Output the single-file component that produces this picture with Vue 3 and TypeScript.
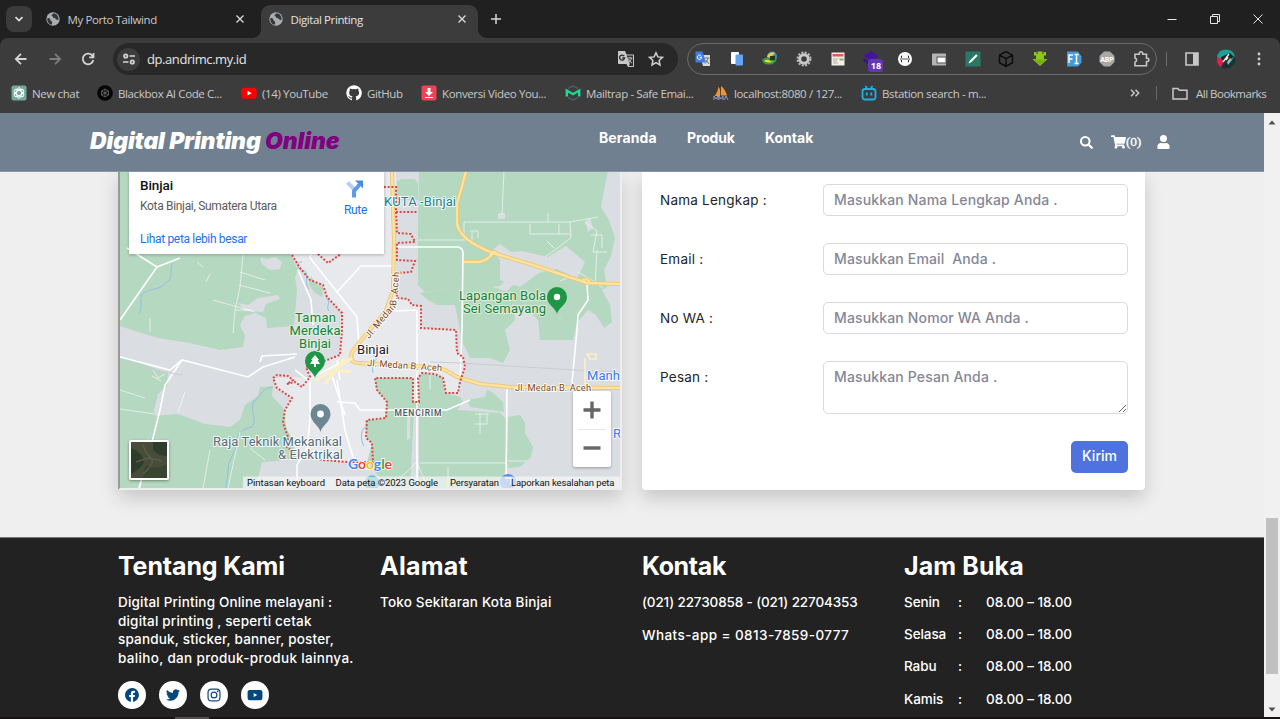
<script setup lang="ts">
interface Bookmark { icon: string; label: string }
interface Field { label: string; hint: string; cls: string; multiline?: boolean }

const tabs = [
  { title: 'My Porto Tailwind', active: false },
  { title: 'Digital Printing', active: true },
]

const extensions = [
  'gtranslate', 'copy', 'idm', 'gear', 'news', 'layers', 'json',
  'wallet', 'pen', 'cube', 'download', 'font', 'abp', 'puzzle',
]

const bookmarks: Bookmark[] = [
  { icon: 'gpt', label: 'New chat' },
  { icon: 'blackbox', label: 'Blackbox AI Code C...' },
  { icon: 'youtube', label: '(14) YouTube' },
  { icon: 'github', label: 'GitHub' },
  { icon: 'convert', label: 'Konversi Video You...' },
  { icon: 'mailtrap', label: 'Mailtrap - Safe Emai...' },
  { icon: 'pma', label: 'localhost:8080 / 127...' },
  { icon: 'bstation', label: 'Bstation search - m...' },
]

const menu = ['Beranda', 'Produk', 'Kontak']

const fields: Field[] = [
  { label: 'Nama Lengkap :', hint: 'Masukkan Nama Lengkap Anda .', cls: 'name' },
  { label: 'Email :', hint: 'Masukkan Email  Anda .', cls: 'email' },
  { label: 'No WA :', hint: 'Masukkan Nomor WA Anda .', cls: 'wa' },
  { label: 'Pesan :', hint: 'Masukkan Pesan Anda .', cls: 'message', multiline: true },
]

const about = [
  'Digital Printing Online melayani :',
  'digital printing , seperti cetak',
  'spanduk, sticker, banner, poster,',
  'baliho, dan produk-produk lainnya.',
]

const hours = ['Senin', 'Selasa', 'Rabu', 'Kamis']
const socials = ['facebook', 'twitter', 'instagram', 'video']
</script>

<template>
  <div class="window">
    <header class="chrome">
      <div class="tabstrip">
        <button class="tab-search">
          <svg width="10" height="10" viewBox="0 0 10 10"><path d="M1.5 3.2 5 6.6l3.500-3.400" /></svg>
        </button>
        <div v-for="tab in tabs" :key="tab.title" class="tab" :class="{ active: tab.active }">
          <svg class="globe" width="14" height="14" viewBox="0 0 14 14">
            <circle cx="7" cy="7" r="6.700" fill="#a9adb1" />
            <path d="M1.300 6.200C3 5.600 4.300 6.500 4.300 7.700s1.900 1 1.900 2.500-.2 2.200-.9 2.600C2.500 12 1 9.500 1.300 6.200ZM7.500 1.300c-.8 1.300-1.900 1-1.900 2.100s1.700.5 1.600 1.900 2 .3 2.400 1.500 1.400 1.400 2.800 1c.7-3-1.500-6.300-4.900-6.500Z" fill="#34373a" />
          </svg>
          <span class="tab-title">{{ tab.title }}</span>
          <svg class="close" width="10" height="10" viewBox="0 0 10 10"><path d="m1.500 1.500 7 7m0-7-7 7" /></svg>
        </div>
        <svg class="new-tab" width="12" height="12" viewBox="0 0 12 12"><path d="M6 1v10M1 6h10" /></svg>
        <div class="win-controls">
          <svg width="12" height="12" viewBox="0 0 12 12"><path d="M1.500 6.500h9" /></svg>
          <svg width="12" height="12" viewBox="0 0 12 12"><path d="M1.500 3.500h7v7h-7zM3.500 3.500v-2h7v7h-2" /></svg>
          <svg width="12" height="12" viewBox="0 0 12 12"><path d="m1.500 1.500 9 9m0-9-9 9" /></svg>
        </div>
      </div>

      <div class="toolbar">
        <div class="history">
          <svg width="14" height="14" viewBox="0 0 14 14"><path d="M12.500 7H2M7 1.800 1.800 7 7 12.200" /></svg>
          <svg class="off" width="14" height="14" viewBox="0 0 14 14"><path d="M1.500 7H12M7 1.800 12.200 7 7 12.200" /></svg>
          <svg width="14" height="14" viewBox="0 0 14 14"><path d="M11.600 4.200A5.300 5.300 0 1 0 12.300 8M12.500 1v4.300H8.200" /></svg>
        </div>
        <div class="omnibox">
          <span class="site-info">
            <svg width="14" height="14" viewBox="0 0 14 14">
              <circle cx="3.700" cy="4" r="1.700" /><path d="M7.500 4H13M1 10h5.500" /><circle cx="10.300" cy="10" r="1.700" />
            </svg>
          </span>
          <span class="url">dp.andrimc.my.id</span>
          <svg class="page-translate" width="18" height="18" viewBox="0 0 18 18">
            <path d="M1 1h7l1.500 3.500H16c.6 0 1 .4 1 1V16c0 .6-.4 1-1 1h-5l-1.500-3H2c-.6 0-1-.4-1-1Z" fill="#c7c7c7" />
            <path d="M9.700 5.500H16V16h-4.300l1.200-2z" fill="#2b2b2b" />
            <path d="M7.200 6.200A2.500 2.500 0 1 0 7.600 8H5.200" fill="none" stroke="#2b2b2b" stroke-width="1.300" />
            <path d="M10.500 8h5M13 6.800V8m1.500 0c-.5 2.500-2 4-3.500 5m.6-4c.8 2 2 3 3.400 4" fill="none" stroke="#c7c7c7" />
          </svg>
          <svg class="star" width="16" height="16" viewBox="0 0 16 16"><path d="m8 1.700 1.900 4.200 4.600.5-3.400 3.100.9 4.500L8 11.700 4 14l.9-4.500-3.400-3.100 4.600-.5Z" /></svg>
        </div>

        <div class="extensions">
          <span v-for="ext in extensions" :key="ext" class="ext">
            <svg width="18" height="18" viewBox="0 0 18 18">
              <g v-if="ext === 'gtranslate'">
                <path d="M6 5h10v11H9z" fill="#d9dadd" /><path d="M1.500 1.500h7l3.500 11h-10.500z" fill="#3f7de0" />
                <path d="M7.300 6A2.200 2.200 0 1 0 7.700 7.300H5.500" fill="none" stroke="#fff" /><path d="M10.500 8h5M14 8c-.3 2-1.300 4-3 5.500m1-3.500 3 4" fill="none" stroke="#777" />
              </g>
              <g v-else-if="ext === 'copy'">
                <rect x="3" y="2" width="8" height="12" rx="1" fill="#fff" /><rect x="7.500" y="4.500" width="7.500" height="11" rx="1" fill="#64a4f5" />
              </g>
              <g v-else-if="ext === 'idm'">
                <circle cx="11" cy="6.500" r="5" fill="#3d8bc9" /><path d="M6 7c1-4 6-6 8-4l-5 5z" fill="#f0cc35" />
                <path d="M1 10c3-3 7-3 9-1s4 0 6-1c-1 5-5 7-9 6.500C4 14.500 2 13 1 10Z" fill="#2f9e3d" /><path d="M3 11c3-2 5-1 6 0s2 0 3 0c-2 2-5 2-9 0Z" fill="#f5d33b" /><path d="M9 6h5v4H9z" fill="#203b22" />
              </g>
              <g v-else-if="ext === 'gear'">
                <circle cx="9" cy="9" r="6.500" fill="none" stroke="#bbb" stroke-width="2" stroke-dasharray="2 1.400" /><circle cx="9" cy="9" r="4.300" fill="none" stroke="#c9c9c9" stroke-width="3" />
              </g>
              <g v-else-if="ext === 'news'">
                <rect x="2.500" y="2.500" width="13" height="13" fill="#f1efe9" /><path d="M3.500 4h11v2.500h-11z" fill="#e5575b" /><path d="M4 9h5M4 11h4M4 13h5" stroke="#b4b48c" /><path d="M10.500 8.500h4v2h-4z" fill="#8bab74" />
              </g>
              <g v-else-if="ext === 'layers'"><path d="m9 1 7.500 5L9 11 1.500 6Z" fill="#4314a0" /><path d="m1.500 8 7.500 5 3-2v4l-3 1.500L1.500 11Z" fill="#35108a" /></g>
              <g v-else-if="ext === 'json'">
                <circle cx="9" cy="9" r="7" fill="#fff" /><path d="M6.200 5.500c-1.400 0 0 3-1.700 3.500 1.700.5.300 3.500 1.700 3.500m5.600-7c1.400 0 0 3 1.700 3.500-1.700.5-.3 3.500-1.700 3.500" fill="none" stroke="#222" /><path d="M6.500 9h1m1 0h1m1 0h1" stroke="#222" stroke-width="1.300" />
              </g>
              <g v-else-if="ext === 'wallet'"><rect x="2" y="3.500" width="14" height="12" rx=".7" fill="#b4b4b4" /><rect x="7" y="7" width="9" height="6" fill="#f5f5f5" stroke="#555" /><path d="M9 8.500h5v3H9z" fill="#fff" /></g>
              <g v-else-if="ext === 'pen'"><path d="M1.500 1.500h15v15h-15z" fill="#2c7866" /><path d="m4.500 13.500 1.200-2.700 6.500-6.500 1.500 1.500-6.500 6.500Z" fill="#fff" /></g>
              <g v-else-if="ext === 'cube'" fill="none" stroke="#0c0c0c" stroke-width="1.500"><path d="m9 1.700 6.500 3.500v7.500L9 16.300l-6.500-3.600V5.200Zm-6.500 3.500L9 8.700l6.500-3.500M9 8.700v7.600" /></g>
              <g v-else-if="ext === 'download'"><path d="M3 2h2.500v2h1V1.500h5V4h1V2H15v3.500h-2V9h3.500L9 16 1.500 9H5V5.500H3Z" fill="#8cc914" /><path d="M3 9.500h12l-6 6Z" fill="#76b112" /></g>
              <g v-else-if="ext === 'font'"><path d="M2 1.500h11l3.500 5v6L13 16.500H2z" fill="#459bd7" /><path d="M4 13V5h4M4 9h3.500M9.500 4.500h4m-2 0v9m-2 0h4" fill="none" stroke="#fff" stroke-width="1.400" /></g>
              <g v-else-if="ext === 'abp'"><path d="M6 1.500h6L16.500 6v6L12 16.500H6L1.500 12V6Z" fill="#a8a8a8" /><text x="9" y="11.600" text-anchor="middle" class="abp">ABP</text></g>
              <path v-else d="M3 4.300h4.300V3.500a1.700 1.700 0 0 1 3.400 0v.8H14.500v4h.8a1.600 1.600 0 0 1 0 3.200h-.8v4.200H3v-3.500a2.200 2.200 0 0 0 0-4.200Z" fill="none" stroke="#c7c7c7" stroke-width="1.600" />
            </svg>
            <b v-if="ext === 'layers'" class="count">18</b>
          </span>
        </div>
        <i class="divider"></i>
        <svg class="side-panel" width="14" height="14" viewBox="0 0 14 14"><path d="M1 1h12v12H1z" fill="none" stroke="#c7c7c7" stroke-width="1.600" /><path d="M8 1h5v12H8z" fill="#c7c7c7" /></svg>
        <svg class="avatar" width="20" height="20" viewBox="0 0 20 20">
          <circle cx="10" cy="10" r="9.500" fill="#173436" /><path d="M1 7A9.500 9.500 0 0 1 19 7l-4 5-3-5-5 1-5 4Z" fill="#1ea297" />
          <path d="M1.500 7.500 8 12l-3 6C1 16 0 12 1.500 7.500Z" fill="#e0204b" /><path d="m5 8 9-4 4 4-4 2-5-1-3 2Z" fill="#222" /><path d="m13 5-6 8M12 8l-2 3" stroke="#e6efe9" stroke-width="1.400" /><path d="m13 9 3 2-5 7-3-1Z" fill="#20242b" /><path d="m14 9-3 4 1 3 4-5Z" fill="#8fbfa5" />
        </svg>
        <svg class="kebab" width="4" height="14" viewBox="0 0 4 14"><circle cx="2" cy="2" r="1.400" /><circle cx="2" cy="7" r="1.400" /><circle cx="2" cy="12" r="1.400" /></svg>
      </div>

      <div class="bookmarks">
        <div v-for="mark in bookmarks" :key="mark.label" class="bookmark">
          <svg width="16" height="16" viewBox="0 0 16 16">
            <g v-if="mark.icon === 'gpt'">
              <rect x=".5" y=".5" width="15" height="15" rx="2" fill="#74aa9c" />
              <g fill="none" stroke="#fff" stroke-width=".9"><ellipse cx="8" cy="8" rx="2.600" ry="5.300" /><ellipse cx="8" cy="8" rx="2.600" ry="5.300" transform="rotate(60 8 8)" /><ellipse cx="8" cy="8" rx="2.600" ry="5.300" transform="rotate(120 8 8)" /></g>
            </g>
            <g v-else-if="mark.icon === 'blackbox'"><circle cx="8" cy="8" r="7.800" fill="#050505" /><path d="m8 4 3.500 2v4L8 12l-3.500-2V6Zm-3.500 2 7 4m0-4-7 4M8 4v8" fill="none" stroke="#777" stroke-width=".7" /></g>
            <g v-else-if="mark.icon === 'youtube'"><rect x=".3" y="2.700" width="15.400" height="11" rx="3" fill="#f00" /><path d="m6.500 5.800 4.200 2.400-4.200 2.400Z" fill="#fff" /></g>
            <path v-else-if="mark.icon === 'github'" fill="#fff" d="M8 .3a7.700 7.700 0 0 0-2.500 15c.4.100.5-.2.500-.4v-1.400c-2.100.5-2.600-1-2.600-1-.4-.9-.9-1.100-.9-1.100-.7-.5.1-.5.1-.5.8.1 1.200.8 1.200.8.700 1.200 1.800.8 2.300.6 0-.5.200-.8.500-1-1.700-.2-3.500-.9-3.500-3.800 0-.8.3-1.500.8-2.100-.1-.2-.4-1 0-2 0 0 .7-.2 2.200.8a7.500 7.500 0 0 1 4 0c1.500-1 2.100-.8 2.100-.8.400 1 .2 1.800.1 2 .5.600.8 1.300.8 2.100 0 3-1.800 3.600-3.500 3.800.3.200.5.700.5 1.400v2.200c0 .2.100.5.500.4A7.700 7.700 0 0 0 8 .3Z" />
            <g v-else-if="mark.icon === 'convert'"><rect x=".5" y=".5" width="15" height="15" rx="2" fill="#ef4254" /><path d="M6.500 3h3v4H12L8 11 4 7h2.500zM4 12h8v1H4z" fill="#fff" /></g>
            <g v-else-if="mark.icon === 'mailtrap'" fill="none"><path d="M3 3.500 8 1l5 2.500M3 12.500 8 15l5-2.500" stroke="#4c6472" stroke-width="1.300" /><path d="M1.800 11.500v-6L8 9.200l6.200-3.700v6" stroke="#22d695" stroke-width="2.400" /></g>
            <g v-else-if="mark.icon === 'pma'"><path d="M1.500 11C4 8 5 5 5.500 1.500c2 3 2 6 1.500 9.500ZM8 10.500V1c3 2 5 6 6 9.500Z" fill="#f29432" /><path d="M1 15v-4l2 3 2-3v4m1 0v-4l2 3 2-3v4m1 0 2-4 2 4" fill="none" stroke="#999ab6" /></g>
            <g v-else fill="none" stroke="#1eb0e3" stroke-width="1.800"><rect x="1.500" y="4" width="13" height="10.500" rx="2.500" /><path d="m4.500 1 1.500 2m5.500-2L10 3M5.700 7.500v3m4.600-3v3" /></g>
          </svg>
          <span>{{ mark.label }}</span>
        </div>
        <svg class="more" width="10" height="8" viewBox="0 0 10 8"><path d="m1 .8 3.200 3.200L1 7.200M5.500.8 8.700 4 5.500 7.200" /></svg>
        <i class="divider"></i>
        <svg class="folder" width="16" height="13" viewBox="0 0 16 13"><path d="M1 1.500h4.800l1.500 1.800H15v8.700H1z" /></svg>
        <span class="all">All Bookmarks</span>
      </div>
    </header>

    <div class="viewport">
      <main class="page">
        <nav class="site-nav">
          <h1 class="logo">Digital Printing <em>Online</em></h1>
          <div class="links"><a v-for="item in menu" :key="item" :class="item.toLowerCase()">{{ item }}</a></div>
          <div class="tools">
            <svg width="13" height="13" viewBox="0 0 512 512"><path d="M505 443 405 343c-4-4-10-7-17-7h-16a208 208 0 1 0-36 36v16c0 7 3 13 7 17l100 100c9 9 25 9 34 0l28-28c9-10 9-25 0-34ZM208 336a128 128 0 1 1 0-256 128 128 0 0 1 0 256Z" /></svg>
            <span class="cart">
              <svg width="15" height="14" viewBox="0 0 576 512"><path d="m528 301 47-208c4-15-8-29-23-29H159l-9-45C148 8 138 0 126 0H24C11 0 0 11 0 24v16c0 13 11 24 24 24h70l70 343a56 56 0 1 0 67 9h210a56 56 0 1 0 64-10l5-25c4-15-8-29-23-29H218l-7-32h294c11 0 21-8 23-19Z" /></svg>
              <span>(0)</span>
            </span>
            <svg width="13" height="14" viewBox="0 0 448 512"><path d="M224 256a128 128 0 1 0 0-256 128 128 0 0 0 0 256Zm90 32h-17a174 174 0 0 1-146 0h-17C60 288 0 348 0 422v42c0 27 22 48 48 48h352c27 0 48-21 48-48v-42c0-74-60-134-134-134Z" /></svg>
          </div>
        </nav>

        <section class="contact">
          <div class="map">
            <svg class="map-canvas" width="500" height="317" viewBox="120 171 500 317">
              <rect x="120" y="171" width="500" height="317" fill="#dadde1" />
              <path fill="#e7e9ed" d="M330 171H396V298L408 299 412 305 421 306V328L456 330 457 353 463 357 465 367 460 382 458 393 446 393 443 378 435 374 422 373 418 378 419 402H413V378H375L377 390 387 402 386 418 367 420 366 438 372 443 373 462H347L323 460 295 454 287 447 283 423 285 410 292 398 277 388 274 378 310 377 307 367 340 355 342 313 327 297 323 285 310 280 292 255Z" />
              <g fill="#b5d8c0">
                <path d="M120 171H290V254L298 270 295 277 297 290 294 326 267 328 266 318 255 313 245 316 240 325 245 336 243 347 220 350 190 343 158 338 132 330 120 326Z" />
                <path d="M120 357 137 362 168 373 167 386 158 394 154 410 157 420 147 440 139 488H120Z" />
                <path d="M155 416 178 414 205 424 230 427 240 420 245 405 258 396 260 387 273 386 272 396 283 408 287 430 293 440 296 458 275 461 262 462 260 470 255 488H141L148 440Z" />
                <path d="M419 171H608L604 190 601 207 609 220 615 238 611 256 604 270 607 287 602 290 610 305 612 322 604 328 596 315 588 310 575 325 560 318 545 327 530 312 512 304 505 293 520 278 498 264 505 248 499 244 492 251 500 260 508 278 500 286 480 288 450 288 425 292 417 284Z" />
                <path d="M420 293 450 288 493 287 510 293 515 320 505 330 510 350 503 363 490 358 470 358 463 343 460 330 455 305 437 305 428 300Z" />
                <path d="M538 320 578 318 573 340 540 340Z" />
                <path d="M375 378H413V402H419V375L423 373 442 377 445 393 460 397 463 402 457 410 500 413 507 420 508 463 503 477 507 488H390L367 463 372 443 367 438 365 420 385 419 387 402 377 390Z" />
                <path d="M467 400 485 397 487 390 492 392 503 402 504 412 470 407ZM508 417 520 415 525 423V433L533 447 531 457 520 467 508 468ZM397 181 402 179H415L418 184V200H397Z" />
                <path d="m311 276 5 8 7 3-1 10-8-5-5-8Z" />
              </g>
              <g fill="#dadde1">
                <path d="M260 257 267 259 276 257 282 262 280 269 270 270 262 264ZM238 303 248 305 258 298 278 295 280 299 266 304 263 312 245 311ZM498 213h7v6h-7ZM400 210h18v74l-18 0Z" />
                <path d="M500 244 511 252 522 251 548 257 566 246 585 262 577 279 557 269 539 273 520 287 500 280ZM585 222 590 218 593 228 588 232Z" />
                <path d="M414 410h5v78h-9ZM407 416h3v22l-3 3Z" />
              </g>
              <g class="stream">
                <path d="M173 263c-5 5 2 13-6 19-9 9-11 5-22 10-8 4-1 14-6 22M302 262c-7 0-4 8 0 8 9 1 1 13 7 19M326 297c6 6-1 9 3 14M273 387c-14 2-12 11-19 14-5 8 4 17-2 26-13 3-16 9-15 18l-8 18-3 25M373 355c8 4-3 9 0 18M368 425c-8 4-8 14-4 21" />
              </g>
              <g class="road thin">
                <path d="M243 255 240 287 235 310 233 333M240 272 265 280M239 285 270 293M235 310 252 310M213 300 255 312M150 318V332M197 262 203 267M210 274 206 282M120 390 145 398M120 409 155 414M153 370l5 8 7-4m-13 2 9 5M185 392l-7 20M240 432l-12 56M210 450l-7 38M250 448l15 12M464 222H570M464 222V240M472 232V243M470 231H478V238M504 171 502 215M548 213V222M530 224V234H570M559 224V234M570 222 598 217M570 222 571 238 545 257M547 241 554 248M585 222 597 231 593 252H607M591 235H602V248M597 250 595 285M418 240H468M480 413V434M475 414H489M474 424H487V414M508 461H527M420 463H507M448 467V488M390 488l27-26 8 20M430 375v14M578 272 590 279 603 288M560 281 572 276" />
              </g>
              <g class="road">
                <path d="M120 320 157 267 127 248M157 267 180 258M120 357 170 370 182 360 248 377 263 367 295 357M260 362 262 356 297 354M295 370 308 380 340 363M182 360 165 385 160 410 150 450 139 488M310 378V420L307 448 297 465V488M337 380 345 430 353 457 367 470M337 402 355 403 360 410H447L470 400M397 247H458Q463 248 463 253L462 330 460 380M360 266H396M337 292 360 267M310 258 357 317 359 345M298 270 311 300 313 325M417 310V410M395 311 417 310M417 405V488M507 387 506 488M577 330 572 383M587 283 588 300 578 315 577 330M340 380 337 360M330 370l15 45M330 171 310 258" />
              </g>
              <path d="M120 364 182 375M430 362 460 363 575 370 620 372" class="rail" />
              <g class="highway edge"><path d="M392 171 394 240 393 290 386 311 366 334 352 352Q349 363 358 363L430 367 445 370 457 377 480 384 510 387 620 388M466 171Q462 188 457 203V223Q459 240 493 253L533 265 587 283 620 284M464 262 480 262Q488 260 493 253M490 255q4-6 8 0M582 281q6-5 8 3" /></g>
              <g class="highway"><path d="M392 171 394 240 393 290 386 311 366 334 352 352Q349 363 358 363L430 367 445 370 457 377 480 384 510 387 620 388M466 171Q462 188 457 203V223Q459 240 493 253L533 265 587 283 620 284M464 262 480 262Q488 260 493 253M490 255q4-6 8 0M582 281q6-5 8 3" /></g>
              <path d="M352 358 330 372 315 381M345 358l-20 26M333 370l18 2" class="minor" />
              <path d="M585 384v-26M587 354h9v5h-6Z" class="minor spur" />
              <path class="border" d="M384 187H396V212H417M396 212 397 233 411 234 415 242 397 243V260L415 261 411 272 397 273V298L408 299 412 305 421 306V328L456 330 457 353 463 357 465 367 460 382 458 393 446 393 443 378 435 374 422 373 418 378 419 402H413V378H375L377 390 387 402 386 418 367 420 366 438 372 443 373 462H347L323 460 295 454 287 447 288 437 283 423 285 410 292 398 277 388 273 378 277 375 288 376 293 380 287 384 295 382 302 387 310 377 306 367 327 360 340 355 342 330V313L327 297 323 285 310 280 300 268 292 255M318 254 328 263 341 254" />

              <g transform="translate(557 314)"><path fill="#1e9646" d="M0 0C-1-6-10-9-10-17a10 10 0 0 1 20 0C10-9 1-6 0 0Z" /><circle cy="-17" r="3.200" fill="#fff" /></g>
              <g transform="translate(315 378)"><path fill="#1e9646" d="M0 0C-1-6-10-9-10-17a10 10 0 0 1 20 0C10-9 1-6 0 0Z" /><path fill="#fff" d="m0-23 4 5H2.500L5-14H1v3h-2v-3h-4l2.500-4H-4Z" /></g>
              <g transform="translate(320.500 432)"><path fill="#6c8693" d="M0 0C-1-6-10-10-10-18a10 10 0 0 1 20 0C10-10 1-6 0 0Z" /><circle cy="-18" r="3.400" fill="#fff" /></g>

              <g class="label teal"><text x="384" y="206" textLength="72">KUTA -Binjai</text></g>
              <g class="label green">
                <text x="459" y="299.500" textLength="87">Lapangan Bola</text><text x="463" y="312.500" textLength="83">Sei Semayang</text>
                <text x="295" y="321.500" textLength="41">Taman</text><text x="289.500" y="334.500" textLength="51">Merdeka</text><text x="299" y="347.500" textLength="32">Binjai</text>
              </g>
              <g class="label slate"><text x="213" y="445.500" textLength="129">Raja Teknik Mekanikal</text><text x="278" y="459" textLength="65">&amp; Elektrikal</text></g>
              <g class="label city"><text x="357" y="354" textLength="32">Binjai</text></g>
              <g class="label area"><text x="394.500" y="416" textLength="47">MENCIRIM</text></g>
              <g class="label street">
                <text transform="translate(367 366)rotate(4)" textLength="75">Jl. Medan B. Aceh</text>
                <text x="515" y="391" textLength="76">Jl. Medan B. Aceh</text>
                <text transform="translate(369 339)rotate(-50)" textLength="42">Jl. Medan</text>
                <text transform="translate(396 306)rotate(-84)" textLength="34">B. Aceh</text>
              </g>
              <g class="label blue"><text x="587" y="380" textLength="33">Manh</text><text x="613" y="438">R</text></g>
              <circle cx="372" cy="483" r="7.500" fill="#19a5bd" /><circle cx="508" cy="482" r="8" fill="#5a8fe8" /><path d="M505 478h6v7" stroke="#fff" fill="none" stroke-width="1.500" />
              <text class="google" x="348" y="469" textLength="44"><tspan fill="#4285f4">G</tspan><tspan fill="#ea4335">o</tspan><tspan fill="#fbbc05">o</tspan><tspan fill="#4285f4">g</tspan><tspan fill="#34a853">l</tspan><tspan fill="#ea4335">e</tspan></text>
              <rect x="243" y="476.500" width="377" height="12" fill="#f5f5f5" fill-opacity=".72" />
              <g class="credits">
                <text x="247" y="486" textLength="78">Pintasan keyboard</text><text x="335.500" y="486" textLength="102.500">Data peta ©2023 Google</text>
                <text x="450" y="486" textLength="49">Persyaratan</text><text x="511" y="486" textLength="103.500">Laporkan kesalahan peta</text>
              </g>
            </svg>
            <div class="place">
              <div class="place-info">
                <strong>Binjai</strong>
                <span>Kota Binjai, Sumatera Utara</span>
                <a>Lihat peta lebih besar</a>
              </div>
              <div class="route">
                <svg width="20" height="20" viewBox="0 0 20 20"><path d="M2.500 3.500 9 10v8" fill="none" stroke="#b4d0f5" stroke-width="4" /><path d="M9 18.500V13c0-3 5-4 5-8" fill="none" stroke="#5c9be6" stroke-width="4" /><path d="M10 1.500h8v8Z" fill="#4a8de0" /></svg>
                <span>Rute</span>
              </div>
            </div>
            <div class="satellite">
              <svg width="36" height="36" viewBox="0 0 36 36"><rect width="36" height="36" fill="#464e3b" /><path d="M0 6q8 3 12 10T0 32Z" fill="#2d3c2b" /><path d="M22 0h14v14q-9 0-14-6Z" fill="#2c3d2d" /><path d="M36 22q-8 6-16 2t-8 12h24Z" fill="#384630" /><path d="M12 3q3 9 8 13t-8 16M5 20l12-4 14 3" fill="none" stroke="#5c5c49" stroke-width="1.500" /></svg>
            </div>
            <div class="zoom">
              <svg width="18" height="18" viewBox="0 0 18 18"><path d="M9 .5v17M.5 9h17" /></svg>
              <i></i>
              <svg width="18" height="18" viewBox="0 0 18 18"><path d="M.5 9h17" /></svg>
            </div>
          </div>

          <form class="form-card" @submit.prevent>
            <label v-for="field in fields" :key="field.label" class="field" :class="field.cls">
              <span>{{ field.label }}</span>
              <textarea v-if="field.multiline" :placeholder="field.hint"></textarea>
              <input v-else type="text" :placeholder="field.hint">
            </label>
            <button class="send">Kirim</button>
          </form>
        </section>

        <footer class="footer">
          <section>
            <h2 class="h-about">Tentang Kami</h2>
            <p class="about"><span v-for="(line, i) in about" :key="i" :class="'line-' + i">{{ line }}</span></p>
            <div class="socials">
              <a v-for="name in socials" :key="name">
                <svg width="14" height="14" viewBox="0 0 16 16">
                  <path v-if="name === 'facebook'" d="M16 8a8 8 0 1 0-9.300 7.900v-5.600h-2V8h2V6.200c0-2 1.200-3.100 3-3.100l1.800.2v2h-1c-1 0-1.300.6-1.300 1.200V8h2.200l-.3 2.300H9.200v5.600A8 8 0 0 0 16 8Z" />
                  <path v-else-if="name === 'twitter'" d="M5 14.500c6 0 9.300-5 9.300-9.300v-.4A6.500 6.500 0 0 0 16 3.100a6 6 0 0 1-1.900.5A3.300 3.300 0 0 0 15.600 1.800a6 6 0 0 1-2.100.8 3.300 3.300 0 0 0-5.600 3A9.300 9.300 0 0 1 1.100 2.200a3.300 3.300 0 0 0 1 4.300 3 3 0 0 1-1.500-.4 3.300 3.300 0 0 0 2.600 3.300 3 3 0 0 1-1.500 0 3.300 3.300 0 0 0 3.100 2.300A6.600 6.600 0 0 1 0 13a9.300 9.300 0 0 0 5 1.500" />
                  <g v-else-if="name === 'instagram'"><rect x="1.200" y="1.200" width="13.600" height="13.600" rx="4" fill="none" stroke="#14497f" stroke-width="1.400" /><circle cx="8" cy="8" r="3.300" fill="none" stroke="#14497f" stroke-width="1.400" /><circle cx="12.200" cy="3.800" r="1" /></g>
                  <g v-else><rect x="-.5" y="2.200" width="17" height="11.800" rx="2.500" /><path d="m6.500 5.800 4 2.300-4 2.300Z" fill="#fff" /></g>
                </svg>
              </a>
            </div>
          </section>
          <section><h2 class="h-address">Alamat</h2><p class="address">Toko Sekitaran Kota Binjai</p></section>
          <section>
            <h2 class="h-contact">Kontak</h2>
            <p class="phone">(021) 22730858 - (021) 22704353</p>
            <p class="whatsapp">Whats-app = 0813-7859-0777</p>
          </section>
          <section>
            <h2 class="h-hours">Jam Buka</h2>
            <dl v-for="day in hours" :key="day"><dt>{{ day }}</dt><dd>:</dd><dd>08.00 – 18.00</dd></dl>
          </section>
        </footer>
      </main>

      <aside class="scrollbar">
        <svg width="8" height="5" viewBox="0 0 8 5"><path d="m4 .5 3.500 4h-7Z" /></svg>
        <div class="track"><div class="thumb"></div></div>
        <svg width="8" height="5" viewBox="0 0 8 5"><path d="M.5.500h7L4 4.500Z" /></svg>
      </aside>
    </div>
    <div class="taskbar"><i></i></div>
  </div>
</template>

<style>
body { margin: 0; overflow: hidden; }
</style>

<style scoped>
.window { width: 1280px; height: 719px; display: flex; flex-direction: column; overflow: hidden; background: #202020; font-family: Inter, "Liberation Sans", sans-serif; }
.window *, .window *::before, .window *::after { box-sizing: border-box; }
svg { display: block; flex: none; overflow: visible; }
.map-canvas { overflow: hidden; }

/* Browser chrome */
.chrome { height: 113px; flex: none; background: #202020; color: #c9c9c9; font: 11.5px "Open Sans", "Noto Sans", sans-serif; }
.tabstrip { height: 38px; display: flex; align-items: center; }
.tab-search { width: 26px; height: 26px; margin-left: 6px; border: 0; padding: 0; border-radius: 8px; background: #3b3b3b; display: grid; place-items: center; }
.tab-search path { fill: none; stroke: #e0e0e0; stroke-width: 1.7; }
.tab { height: 32px; width: 218px; display: flex; align-items: center; padding: 0 11px 4px 8px; margin: 5px 0 0 6px; align-self: flex-start; }
.tab + .tab { margin-left: 5px; width: 217px; }
.tab.active { position: relative; background: #3c3c3c; border-radius: 9px 9px 0 0; height: 33px; padding-bottom: 5px; color: #e3e3e3; }
.tab.active::before, .tab.active::after { content: ""; position: absolute; bottom: 0; width: 8px; height: 8px; }
.tab.active::before { left: -8px; background: radial-gradient(circle at 0 0, transparent 7.5px, #3c3c3c 8px); }
.tab.active::after { right: -8px; background: radial-gradient(circle at 100% 0, transparent 7.5px, #3c3c3c 8px); }
.tab-title { margin-left: 7.5px; letter-spacing: -.4px; }
.close { margin-left: auto; }
.close path { stroke: #d8d8d8; stroke-width: 1.4; }
.new-tab { margin-left: 12px; }
.new-tab path { stroke: #d8d8d8; stroke-width: 1.5; }
.win-controls { margin-left: auto; display: flex; gap: 31px; padding-right: 16px; }
.win-controls path { fill: none; stroke: #e6e6e6; }

.toolbar { height: 42px; display: flex; align-items: center; background: #3c3c3c; border-radius: 8px 8px 0 0; }
.history { display: flex; gap: 19.5px; margin-left: 14px; width: 99px; }
.history path { fill: none; stroke: #d4d4d4; stroke-width: 1.8; }
.history .off path { stroke: #7c7c7c; }
.omnibox { width: 565px; height: 32px; border-radius: 16px; background: #282828; display: flex; align-items: center; padding-left: 4px; }
.site-info { width: 23px; height: 23px; border-radius: 50%; background: #3c3c3c; display: grid; place-items: center; }
.site-info svg { fill: none; stroke: #d6d6d6; stroke-width: 1.7; }
.url { margin-left: 7px; font-size: 13px; letter-spacing: -.42px; color: #e6e6e6; }
.page-translate { margin-left: auto; }
.star { margin: 0 14px 0 13px; fill: none; stroke: #d0d0d0; stroke-width: 1.5; }
.extensions { width: 470px; height: 32px; margin-left: 9px; border: 1px solid #6a6a6a; border-radius: 16px; display: flex; align-items: center; gap: 15.7px; padding-left: 6px; }
.ext { position: relative; flex: none; }
.count { position: absolute; left: 6px; top: 9px; width: 15px; height: 13px; border-radius: 3px; background: #6338b3; color: #fff; font: 700 9px/13px "Open Sans", sans-serif; text-align: center; }
.abp { font: 700 7px Roboto, sans-serif; fill: #fff; }
.divider { width: 1px; height: 14px; background: #6c6c6c; }
.toolbar .divider { margin-left: 9px; }
.side-panel { margin-left: 18px; }
.avatar { margin-left: 17px; }
.kebab { margin-left: 21px; fill: #d0d0d0; }

.bookmarks { height: 33px; display: grid; grid-template-columns: 86px 144px 105px 75px 144px 148px 148px 269px 26px 16px 24px auto; align-items: center; padding: 0 0 7px 11px; background: #3c3c3c; white-space: nowrap; }
.bookmark { display: flex; align-items: center; gap: 5px; letter-spacing: -.37px; }
.more path { fill: none; stroke: #c9c9c9; stroke-width: 1.5; }
.bookmarks .divider { background: #686868; }
.folder { fill: none; stroke: #c9c9c9; stroke-width: 1.5; }
.all { letter-spacing: -.5px; }

/* Page */
.viewport { height: 604px; display: flex; }
.page { width: 1264px; overflow: hidden; background: #efefef; }
.site-nav { height: 59px; position: relative; z-index: 2; background: #708090; border-bottom: 1px solid #8794a1; display: flex; color: #fff; }
.logo { width: 509px; margin: 13px 0 0 90px; font-size: 23px; line-height: 30px; font-weight: 900; font-style: italic; letter-spacing: -.15px; white-space: nowrap; }
.logo em { color: #800080; }
.links { display: flex; padding-top: 15px; width: 481px; font-weight: 700; font-size: 14px; line-height: 20px; }
.links a { width: 88px; letter-spacing: .1px; }
.links .produk { width: 78px; letter-spacing: -.15px; }
.links .kontak { letter-spacing: 0; }
.tools { display: flex; align-items: center; fill: #fff; }
.cart { display: flex; align-items: center; margin: 0 16px 0 18px; font: 13.5px "Liberation Serif", serif; letter-spacing: -.2px; -webkit-text-stroke: .3px #fff; }

.contact { height: 365px; display: flex; gap: 20px; padding: 0 119px 47px 118px; }
.map, .form-card { box-shadow: 0 8px 18px rgba(0, 0, 0, .17); }
.map { position: relative; width: 504px; height: 319px; margin-top: -1px; border: 2px solid #eee; border-left-color: #9a9a9a; border-top: 0; }
.road path { fill: none; stroke: #fff; stroke-width: 1.6; }
.road.thin path { stroke-width: .8; opacity: .75; }
.rail { fill: none; stroke: #c9cdd2; }
.stream path { fill: none; stroke: #93c0e0; stroke-width: 1; }
.highway path { fill: none; stroke: #fce3a0; stroke-width: 2.4; }
.highway.edge path { stroke: #ecc36d; stroke-width: 4; }
.minor { fill: none; stroke: #fdf0c3; stroke-width: 3; }
.minor.spur { stroke-width: 1.6; }
.border { fill: none; stroke: #dc4440; stroke-width: 2; stroke-dasharray: 1.9 1.8; }
.label text { font-family: Roboto, sans-serif; font-size: 13px; paint-order: stroke; stroke: #fff; stroke-width: 2px; stroke-opacity: .85; stroke-linejoin: round; }
.teal text { fill: #168393; }
.green text { fill: #188038; stroke: #e3f4e8; }
.slate text { fill: #546e7a; }
.city text { fill: #202124; }
.area text { font-size: 8.5px; font-weight: 500; fill: #4e565f; }
.street text { font-size: 9.3px; fill: #7a4b22; }
.blue text { fill: #3b78e7; }
.google { font: 700 14px "Lato", Roboto, sans-serif; paint-order: stroke; stroke: #fff; stroke-width: 1.5px; }
.credits text { font: 9.5px Roboto, sans-serif; fill: #111; }
.place { position: absolute; left: 9px; top: 0; width: 255px; height: 83px; background: #fff; box-shadow: 0 1px 3px rgba(0, 0, 0, .25); display: flex; justify-content: space-between; padding: 6px 17px 0 11px; font: 12px Roboto, sans-serif; }
.place-info { display: flex; flex-direction: column; }
.place strong { font-size: 13.5px; line-height: 16px; font-weight: 500; letter-spacing: -.1px; color: #111; }
.place-info span { margin-top: 6px; line-height: 14px; color: #5b5b5b; letter-spacing: -.32px; }
.place a { margin-top: 19px; line-height: 14px; color: #1a73e8; letter-spacing: -.33px; }
.route { display: flex; flex-direction: column; align-items: center; padding-top: 2px; color: #1a73e8; line-height: 14px; letter-spacing: -.3px; }
.route span { margin-top: 4px; }
.satellite { position: absolute; left: 9px; top: 269px; width: 40px; height: 40px; border: 2px solid #fff; border-radius: 2px; box-shadow: 0 1px 3px rgba(0, 0, 0, .4); }
.zoom { position: absolute; left: 453px; top: 220px; width: 38px; height: 76px; background: #fff; border-radius: 2px; box-shadow: 0 1px 3px rgba(0, 0, 0, .3); display: flex; flex-direction: column; align-items: center; justify-content: space-between; padding: 10px 0; }
.zoom i { width: 28px; height: 1px; background: #e6e6e6; }
.zoom path { stroke: #666; stroke-width: 3.4; }

.form-card { width: 503px; height: 319px; padding: 13px 17px 0 18px; margin-top: -1px; background: #fff; border-radius: 0 0 4px 4px; display: flex; flex-direction: column; }
.field { display: flex; justify-content: space-between; margin-bottom: 27px; font-size: 13.5px; line-height: 20px; letter-spacing: .23px; color: #212529; }
.field > span { padding-top: 5.5px; }
.field input, .field textarea { width: 305px; height: 32px; margin: 0; padding: 0 10px 1px; border: 1px solid #d6d9e2; border-radius: 5px; outline: 0; background: #fff; font: 500 14px/20px Inter, sans-serif; letter-spacing: .15px; }
.field textarea { height: 53px; padding-top: 5px; resize: both; }
.field ::placeholder { color: #858796; opacity: 1; }
.send { align-self: flex-end; width: 57px; height: 32px; border: 0; padding: 0 0 3px; border-radius: 5px; background: #4e73df; color: #fff; font: 500 14px Inter, sans-serif; }

.footer { height: 180px; padding-left: 118px; display: grid; grid-template-columns: 262px 262px 262px 1fr; background: #222; border-top: 1px solid #777; color: #fff; font-weight: 500; font-size: 13.5px; line-height: 19px; white-space: nowrap; }
.footer h2 { margin: 12px 0 19px; font-size: 25px; line-height: 32px; font-weight: 700; }
.footer .h-about { letter-spacing: -.12px; }
.footer .h-address { letter-spacing: .25px; }
.footer .h-contact { letter-spacing: -.35px; }
.footer .h-hours { letter-spacing: .1px; }
.footer p { margin: -8px 0 21.500px; }
.about span { display: block; line-height: 18.7px; letter-spacing: .18px; }
.about .line-3 { letter-spacing: .33px; }
.address { letter-spacing: .17px; }
.phone { letter-spacing: -.13px; }
.whatsapp { letter-spacing: .42px; }
.footer .about { margin-bottom: 13px; }
.socials { display: flex; gap: 13px; }
.socials a { width: 28px; height: 28px; border-radius: 50%; background: #fff; display: grid; place-items: center; fill: #04477c; }
.footer dl { margin: -8px 0 21.200px; display: grid; grid-template-columns: 54px 28px auto; letter-spacing: -.08px; }
.footer dd { margin: 0; }

.scrollbar { width: 16px; background: #f1f1f1; display: flex; flex-direction: column; align-items: center; padding: 7px 0 5px; fill: #505050; }
.track { flex: 1; width: 12px; padding-top: 393px; }
.thumb { height: 156px; background: #c1c1c1; }
.taskbar { height: 2px; background: #171215; padding-left: 175px; }
.taskbar i { display: block; width: 34px; height: 2px; background: #514d50; }
</style>
